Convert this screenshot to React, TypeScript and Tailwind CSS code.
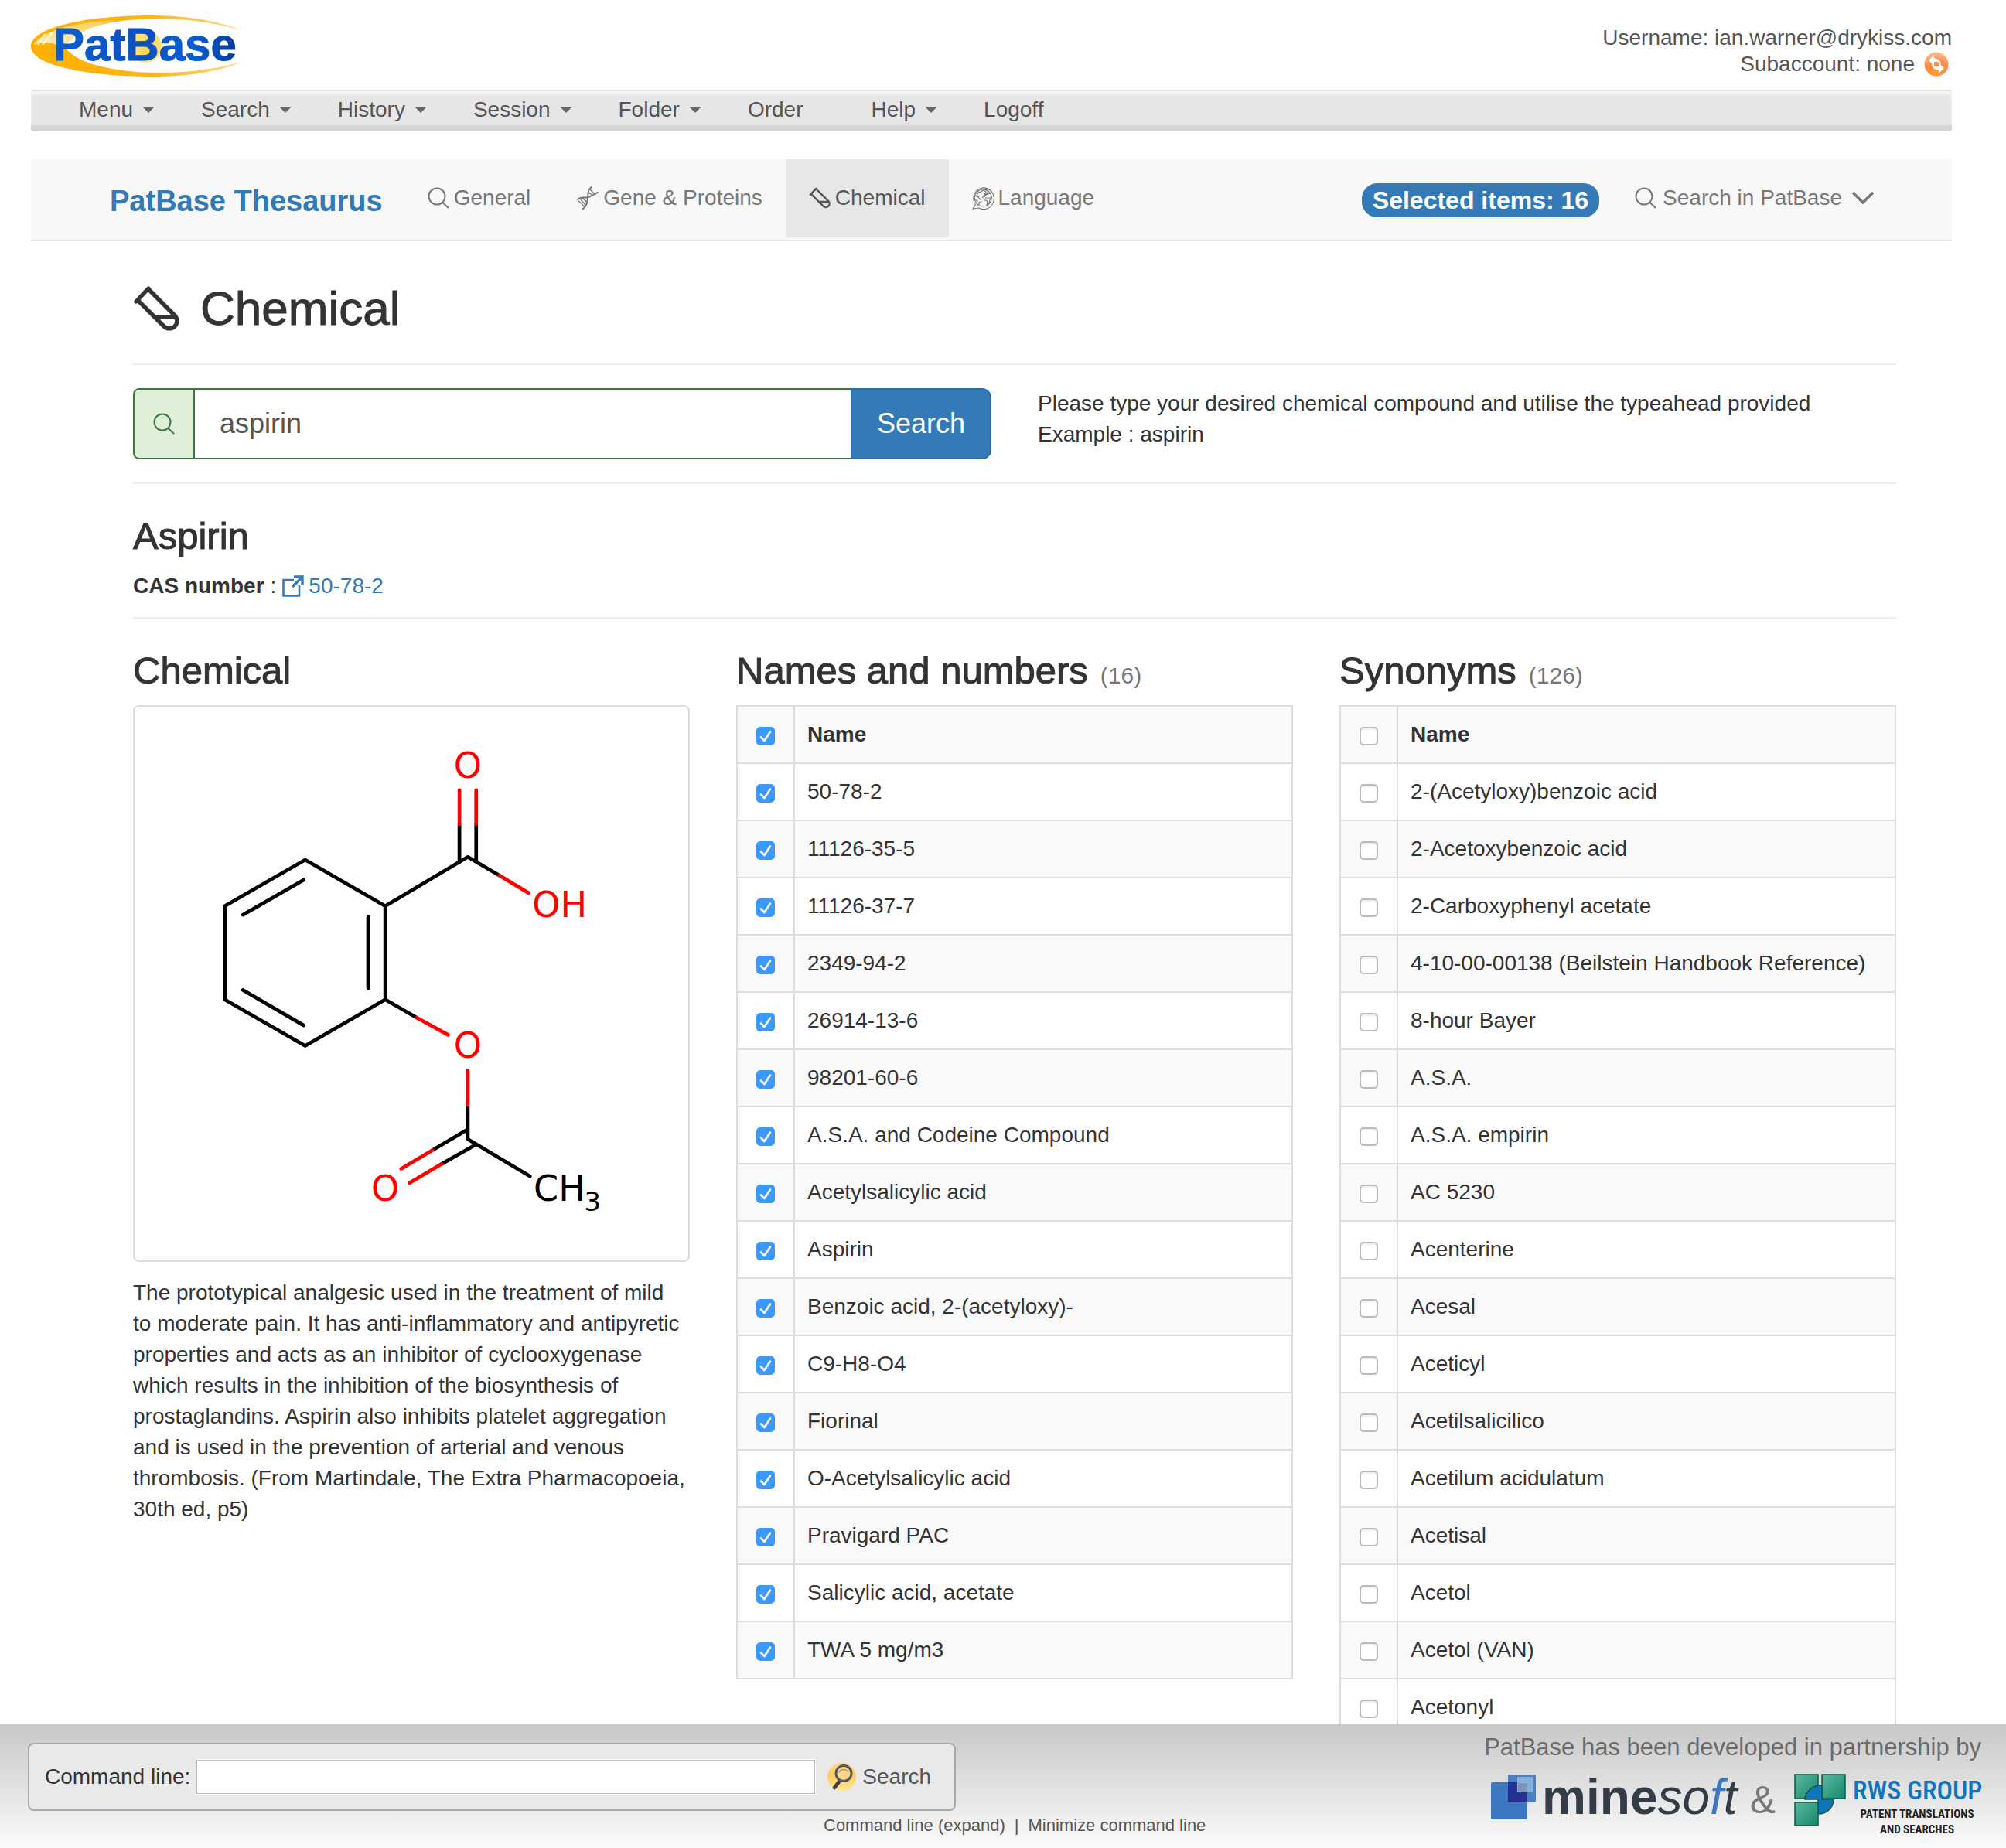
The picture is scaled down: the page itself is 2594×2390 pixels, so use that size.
import type { ReactNode } from "react";

const names = [
  "50-78-2",
  "11126-35-5",
  "11126-37-7",
  "2349-94-2",
  "26914-13-6",
  "98201-60-6",
  "A.S.A. and Codeine Compound",
  "Acetylsalicylic acid",
  "Aspirin",
  "Benzoic acid, 2-(acetyloxy)-",
  "C9-H8-O4",
  "Fiorinal",
  "O-Acetylsalicylic acid",
  "Pravigard PAC",
  "Salicylic acid, acetate",
  "TWA 5 mg/m3",
];

const synonyms = [
  "2-(Acetyloxy)benzoic acid",
  "2-Acetoxybenzoic acid",
  "2-Carboxyphenyl acetate",
  "4-10-00-00138 (Beilstein Handbook Reference)",
  "8-hour Bayer",
  "A.S.A.",
  "A.S.A. empirin",
  "AC 5230",
  "Acenterine",
  "Acesal",
  "Aceticyl",
  "Acetilsalicilico",
  "Acetilum acidulatum",
  "Acetisal",
  "Acetol",
  "Acetol (VAN)",
  "Acetonyl",
];

const menu = [
  { label: "Menu", caret: true },
  { label: "Search", caret: true },
  { label: "History", caret: true },
  { label: "Session", caret: true },
  { label: "Folder", caret: true },
  { label: "Order", caret: false },
  { label: "Help", caret: true },
  { label: "Logoff", caret: false },
];

function PatBaseLogo() {
  return (
    <svg className="h-[80px] w-[276px]" viewBox="0 0 276 80" role="img" aria-label="PatBase">
      <defs>
        <linearGradient id="swoosh" x1="0" y1="0" x2="1" y2="0">
          <stop offset="0" stopColor="#ffb000" />
          <stop offset="0.55" stopColor="#ffb414" />
          <stop offset="0.8" stopColor="#fcc94e" />
          <stop offset="1" stopColor="#fde3a0" />
        </linearGradient>
        <linearGradient id="gloss" x1="0" y1="0" x2="0" y2="1">
          <stop offset="0" stopColor="#ffcf5a" />
          <stop offset="1" stopColor="#fff0c4" />
        </linearGradient>
        <linearGradient id="lettering" x1="0" y1="0" x2="1" y2="0">
          <stop offset="0" stopColor="#0a5fd0" />
          <stop offset="0.5" stopColor="#0a50bd" />
          <stop offset="0.75" stopColor="#0b5fd2" />
          <stop offset="1" stopColor="#063c9a" />
        </linearGradient>
        <radialGradient id="sun" cx="0.6" cy="0.5" r="0.6">
          <stop offset="0" stopColor="#ffd23c" />
          <stop offset="1" stopColor="#ffe68a" />
        </radialGradient>
      </defs>
      <path
        d="M275 20C240 6 195 0 155 0C70 0 0 16 0 40C0 64 70 79 160 79C200 79 245 73 275 59C245 68 210 74 165 74C110 74 55 62 44 40C50 16 110 4 165 4C205 4 245 11 275 20Z"
        fill="url(#swoosh)"
      />
      <path d="M4 38C12 22 50 9 110 6C70 16 50 28 44 42C28 34 14 34 4 38Z" fill="url(#gloss)" />
      <path d="M9 38L18 24M15 38L28 22" stroke="#fff6dc" strokeWidth="2" />
      <circle cx="148" cy="40" r="21" fill="url(#sun)" />
      <text
        x="29"
        y="58"
        fontSize="60"
        fontWeight="700"
        fontFamily="'Liberation Sans', Arial, sans-serif"
        fill="url(#lettering)"
        stroke="url(#lettering)"
        strokeWidth="1"
      >
        PatBase
      </text>
    </svg>
  );
}

function SearchIcon({ className }: { className: string }) {
  return (
    <svg className={className} viewBox="0 0 28 28" fill="none" stroke="currentColor" strokeWidth="2" aria-hidden="true">
      <circle cx="12" cy="12" r="10.5" />
      <path d="M19 19.5L27 27" />
    </svg>
  );
}

function TubeIcon({ className }: { className: string }) {
  return (
    <svg
      className={className}
      viewBox="0 0 60 62"
      fill="none"
      stroke="currentColor"
      strokeWidth="5.400"
      strokeLinecap="round"
      aria-hidden="true"
    >
      <path d="M4 22L20 5" />
      <path d="M7 21L40 54A9.500 9.500 0 0 0 54 40L21 7" />
      <path d="M29 42H53" />
    </svg>
  );
}

function DnaIcon({ className }: { className: string }) {
  return (
    <svg className={className} viewBox="0 0 28 30" fill="none" stroke="currentColor" strokeLinecap="round" aria-hidden="true">
      <path d="M1 17C5 12 11 16 15 14C19 13 21 10 27 8" strokeWidth="2" />
      <path d="M19 1C13 5 15 10 14 15C13 20 14 24 8 29" strokeWidth="2" />
      <path d="M17 4L24 11M15.500 8L20 12M4 16L11 24M8 15.500L12.500 20.500M2.500 19L9.500 26" strokeWidth="1.200" />
    </svg>
  );
}

function GlobeIcon({ className }: { className: string }) {
  return (
    <svg className={className} viewBox="0 0 28 30" fill="none" stroke="currentColor" strokeWidth="1.100" aria-hidden="true">
      <path d="M4.500 24A13.200 13.800 0 1 1 9 28L1 29Z" />
      <circle cx="14.200" cy="14.800" r="11" />
      <path d="M7 6L10 8L14 5L18 7L16 10L20 10M15 4L21 6L19 9L15 12L13 15M23 9L18 11L15 15L17 18L20 19L19 24L22 22L23 17L25 15H17M4 12L8 14L11 17L12 20L9 21L9 25M4 17L7 19L6 22M8 8L6 12L10 13" />
    </svg>
  );
}

function ExternalIcon({ className }: { className: string }) {
  return (
    <svg className={className} viewBox="0 0 28 28" fill="none" stroke="currentColor" aria-hidden="true">
      <path d="M15 6H1.500V26.500H22V13" strokeWidth="2.600" />
      <path d="M13 15L25 3" strokeWidth="3.400" />
      <path d="M15 2H26V13" strokeWidth="3.400" />
    </svg>
  );
}

function SwapIcon() {
  return (
    <svg className="h-8 w-8" viewBox="0 0 32 32" aria-hidden="true">
      <defs>
        <radialGradient id="swap" cx="0.5" cy="0.85" r="0.8">
          <stop offset="0" stopColor="#ff9a2e" />
          <stop offset="0.6" stopColor="#fb8c4a" />
          <stop offset="1" stopColor="#fdb888" />
        </radialGradient>
      </defs>
      <circle cx="16" cy="16" r="15.500" fill="url(#swap)" />
      <path d="M6 11L13 4V8L19 10L23 16L17 13H13V18Z" fill="#fff" />
      <path d="M26 21L19 28V24L13 22L9 16L15 19H19V14Z" fill="#fff" />
    </svg>
  );
}

function LensIcon() {
  return (
    <svg className="h-[38px] w-[37px]" viewBox="0 0 37 38" aria-hidden="true">
      <defs>
        <linearGradient id="lens" x1="0" y1="0" x2="0" y2="1">
          <stop offset="0" stopColor="#fbd9a0" />
          <stop offset="0.4" stopColor="#ffcb5e" />
          <stop offset="1" stopColor="#ffe98f" />
        </linearGradient>
      </defs>
      <circle cx="18.500" cy="19" r="18.500" fill="url(#lens)" />
      <path d="M16 24L9 33" stroke="#3f3f3f" strokeWidth="4.500" strokeLinecap="round" />
      <circle cx="21" cy="14.500" r="10" fill="#fbd58c" stroke="#55575a" strokeWidth="3" />
      <path d="M15 13C17 9 24 8 27 13" fill="none" stroke="#c99b58" strokeWidth="1.800" />
    </svg>
  );
}

function Molecule() {
  return (
    <svg
      className="w-full"
      viewBox="27 27 1522 1522"
      fill="none"
      strokeWidth="10"
      strokeLinecap="round"
      strokeLinejoin="round"
      role="img"
      aria-label="Structure of aspirin"
    >
      <g stroke="#000">
        <path d="M496 448L716 575V832L496 959L275 832V575Z" />
        <path d="M492 503L325 599M669 605V801M325 806L492 903" />
        <path d="M716 575L943 440L1030 491" />
        <path d="M920 350V453M966 350V453" />
        <path d="M716 832L803 882" />
        <path d="M943 1126V1216L1114 1318" />
        <path d="M943 1189L846 1246M966 1230L871 1284" />
      </g>
      <g stroke="#f00">
        <path d="M920 256V350M966 256V350" />
        <path d="M1030 491L1110 539M803 882L889 929" />
        <path d="M943 1027V1122M846 1246L760 1297M871 1284L783 1336" />
      </g>
      <g fontFamily="'DejaVu Sans', sans-serif" fontSize="98" fill="#f00" stroke="none">
        <text x="943" y="222" textAnchor="middle">O</text>
        <text x="1120" y="605">OH</text>
        <text x="943" y="993" textAnchor="middle">O</text>
        <text x="716" y="1385" textAnchor="middle">O</text>
      </g>
      <g fontFamily="'DejaVu Sans', sans-serif" fill="#000" stroke="none">
        <text x="1124" y="1385" fontSize="98">CH</text>
        <text x="1263" y="1412" fontSize="72">3</text>
      </g>
    </svg>
  );
}

function MinesoftMark() {
  return (
    <svg className="h-[60px] w-[58px]" viewBox="0 0 58 60" aria-hidden="true">
      <rect x="0" y="11" width="47" height="48" rx="2" fill="#3c78c0" />
      <rect x="22" y="1" width="36" height="36" rx="2" fill="#4a80c6" />
      <rect x="22" y="11" width="25" height="26" fill="#262f92" />
      <rect x="34" y="4" width="20" height="20" fill="#86b0de" />
      <rect x="35" y="12" width="12" height="12" fill="#7f95b8" />
    </svg>
  );
}

function RwsMark() {
  return (
    <svg className="h-[68px] w-[68px]" viewBox="0 0 68 68" aria-hidden="true">
      <defs>
        <linearGradient id="tile" x1="0" y1="0" x2="1" y2="1">
          <stop offset="0" stopColor="#5fb9a0" />
          <stop offset="1" stopColor="#12876b" />
        </linearGradient>
      </defs>
      <g stroke="#0c5a48" strokeWidth="1.500">
        <rect x="1" y="1" width="30" height="31" fill="url(#tile)" />
        <rect x="36" y="1" width="30" height="31" fill="url(#tile)" />
        <path d="M31 15C20 18 14 26 14 33H31V52C42 52 51 44 51 33H36V15Z" fill="#0f75bc" />
        <rect x="1" y="37" width="30" height="30" fill="url(#tile)" />
      </g>
    </svg>
  );
}

function Heading({ children, count }: { children: ReactNode; count?: number }) {
  return (
    <h3 className="flex h-[54px] items-baseline gap-4 text-[49px] leading-[54px] [-webkit-text-stroke:1px_#333]">
      {children}
      {count !== undefined && (
        <small className="text-[30px] text-[#777] [-webkit-text-stroke:0]">({count})</small>
      )}
    </h3>
  );
}

function CheckCell({ label, checked }: { label: string; checked: boolean }) {
  return (
    <td className="w-[74px] border-2 border-[#ddd] p-0">
      <label className="relative mx-auto mt-1 block size-6">
        <input
          type="checkbox"
          aria-label={label}
          defaultChecked={checked}
          className="peer block size-6 appearance-none rounded-[5px] border-2 border-[#bbb] bg-white shadow-[inset_0_2px_2px_#eee] checked:border-[#3b99fc] checked:bg-[#3b99fc] checked:shadow-none"
        />
        <svg
          className="pointer-events-none absolute inset-0 hidden size-6 peer-checked:block"
          viewBox="0 0 24 24"
          fill="none"
          stroke="#fff"
          strokeWidth="2.600"
          strokeLinecap="round"
          strokeLinejoin="round"
          aria-hidden="true"
        >
          <path d="M6 13.500L10.500 18L18 6.500" />
        </svg>
      </label>
    </td>
  );
}

function NameTable({ rows, checked, caption }: { rows: string[]; checked: boolean; caption: string }) {
  return (
    <table className="w-full table-fixed border-collapse" aria-label={caption}>
      <thead>
        <tr className="h-[74px] bg-[#f9f9f9]">
          <CheckCell label={"Select all " + caption} checked={checked} />
          <th scope="col" className="border-2 border-[#ddd] px-4 text-left font-bold">
            Name
          </th>
        </tr>
      </thead>
      <tbody>
        {rows.map((row) => (
          <tr key={row} className="h-[74px] bg-white even:bg-[#f9f9f9]">
            <CheckCell label={row} checked={checked} />
            <td className="border-2 border-[#ddd] px-4 whitespace-nowrap">{row}</td>
          </tr>
        ))}
      </tbody>
    </table>
  );
}

function Tab({ icon, label, active }: { icon: ReactNode; label: string; active?: boolean }) {
  return (
    <a
      href="#"
      aria-current={active ? "page" : undefined}
      className={
        active
          ? "flex h-[100px] items-center gap-1.5 bg-[#e7e7e7] px-[30px] text-[#555]"
          : "flex h-[100px] items-center gap-1.5 px-[30px] text-[#777]"
      }
    >
      {icon}
      {label}
    </a>
  );
}

export default function App() {
  return (
    <div className="min-h-screen bg-white font-['Liberation_Sans',Arial,sans-serif] text-[28px] leading-[40px] text-[#333]">
      <div className="pr-[70px] pl-10">
        <header className="flex h-[116px] justify-between pt-5">
          <a href="#" className="block h-20">
            <PatBaseLogo />
          </a>
          <div className="pt-3 text-right leading-[34px] text-[#555]">
            <div>Username: ian.warner@drykiss.com</div>
            <div className="flex items-center justify-end gap-3 pr-1">
              Subaccount: none
              <button type="button" aria-label="Switch subaccount">
                <SwapIcon />
              </button>
            </div>
          </div>
        </header>

        <nav
          aria-label="Main"
          className="flex h-[54px] items-center gap-[60px] rounded border-t-2 border-b-8 border-t-[#e2e2e2] border-b-[#d4d5d7] bg-[#e6e6e6] pt-1 pl-[62px] text-[#555] shadow-[inset_0_4px_3px_#f6f6f6]"
        >
          {menu.map((item) => (
            <a key={item.label} href="#" className="flex items-center gap-3">
              {item.label}
              {item.label !== "Logoff" && (
                <span
                  className={
                    item.caret
                      ? "border-x-8 border-t-8 border-x-transparent border-t-[#666]"
                      : "border-x-8 border-t-8 border-transparent"
                  }
                />
              )}
            </a>
          ))}
        </nav>

        <nav
          aria-label="Thesaurus"
          className="mt-9 flex h-[106px] items-start border-b-2 border-[#e7e7e7] bg-[#f8f8f8] pr-[100px] pl-[102px]"
        >
          <a href="#" className="mr-7 pt-1 text-[38px] leading-[100px] font-bold text-[#337ab7]">
            PatBase Thesaurus
          </a>
          <Tab icon={<SearchIcon className="size-7" />} label="General" />
          <Tab icon={<DnaIcon className="h-[30px] w-7" />} label="Gene & Proteins" />
          <Tab icon={<TubeIcon className="h-[30px] w-7" />} label="Chemical" active />
          <Tab icon={<GlobeIcon className="h-[30px] w-7" />} label="Language" />
          <div className="ml-auto flex h-[106px] items-center">
            <span className="rounded-[20px] bg-[#337ab7] px-[14px] text-[32px] leading-[44px] font-bold text-white">
              Selected items: 16
            </span>
          </div>
          <button type="button" className="ml-[46px] flex h-[100px] items-center gap-2 text-[#777]">
            <SearchIcon className="size-7" />
            Search in PatBase
            <svg className="ml-1 h-5 w-[30px]" viewBox="0 0 30 20" fill="none" stroke="currentColor" strokeWidth="3.500" aria-hidden="true">
              <path d="M2 3L15 16L28 3" />
            </svg>
          </button>
        </nav>

        <main className="pr-[72px] pl-[132px]">
          <h1 className="flex h-[160px] items-center gap-[27px] border-b-2 border-[#eee] pt-4 text-[62px] leading-[66px] [-webkit-text-stroke:1px_#333]">
            <TubeIcon className="h-[62px] w-[60px]" />
            Chemical
          </h1>

          <form className="grid grid-cols-2 gap-[60px] border-b-2 border-[#eee] py-[30px]">
            <div className="flex h-[92px]">
              <label
                htmlFor="compound"
                aria-label="Chemical compound"
                className="flex w-[78px] items-center justify-center rounded-l-lg border-2 border-r-0 border-[#3c763d] bg-[#dff0d8] text-[#3c763d]"
              >
                <SearchIcon className="size-7" />
              </label>
              <input
                id="compound"
                type="text"
                defaultValue="aspirin"
                className="min-w-0 flex-1 border-2 border-r-0 border-[#3c763d] bg-white px-8 text-[36px] text-[#555] shadow-[inset_0_2px_2px_rgba(0,0,0,0.075)] outline-none"
              />
              <button
                type="button"
                className="rounded-r-xl border-2 border-[#2e6da4] bg-[#337ab7] px-8 text-[36px] text-white"
              >
                Search
              </button>
            </div>
            <p>
              Please type your desired chemical compound and utilise the typeahead provided
              <br />
              Example : aspirin
            </p>
          </form>

          <section className="h-[174px] border-b-2 border-[#eee] pt-10">
            <Heading>Aspirin</Heading>
            <p className="mt-[18px] flex items-center">
              <b>CAS number</b>
              <span className="ml-2">:</span>
              <a href="#" className="ml-2 flex items-center gap-1.5 text-[#337ab7]">
                <ExternalIcon className="size-7" />
                50-78-2
              </a>
            </p>
          </section>

          <div className="grid grid-cols-3 gap-[60px] pt-10">
            <section>
              <Heading>Chemical</Heading>
              <div className="mt-[18px] overflow-hidden rounded-lg border-2 border-[#ddd]">
                <Molecule />
              </div>
              <p className="mt-5">
                The prototypical analgesic used in the treatment of mild to&nbsp;moderate pain. It has anti-inflammatory
                and antipyretic properties and acts as an inhibitor of cyclooxygenase which results in the inhibition of
                the biosynthesis of prostaglandins. Aspirin also inhibits platelet aggregation and is used in the
                prevention of arterial and venous thrombosis. (From Martindale, The Extra Pharmacopoeia, 30th ed, p5)
              </p>
            </section>
            <section>
              <Heading count={16}>Names and numbers</Heading>
              <div className="mt-[18px]">
                <NameTable rows={names} checked caption="Names and numbers" />
              </div>
            </section>
            <section>
              <Heading count={126}>Synonyms</Heading>
              <div className="mt-[18px]">
                <NameTable rows={synonyms} checked={false} caption="Synonyms" />
              </div>
            </section>
          </div>
        </main>
      </div>

      <footer className="fixed inset-x-0 bottom-0 flex h-[160px] justify-between bg-linear-to-b from-[#c8c8c8] to-[#fbfbfb] pr-8 pl-9">
        <div className="flex items-end">
          <form className="mb-12 flex h-[88px] w-[1200px] items-center rounded-lg border-2 border-[#a8a8a8] bg-[#e9e9e9] pl-5">
            <label htmlFor="command">Command line:</label>
            <input
              id="command"
              type="text"
              className="ml-2 h-[44px] w-[800px] border border-[#bbb] bg-white outline-1 outline-white"
            />
            <button type="button" className="ml-4 flex items-center gap-2 text-[#555]">
              <LensIcon />
              Search
            </button>
          </form>
          <div className="mb-[14px] -ml-[171px] flex gap-3 text-[22px] leading-[30px] text-[#555]">
            <a href="#">Command line (expand)</a>
            <span>|</span>
            <a href="#">Minimize command line</a>
          </div>
        </div>
        <div className="pt-2">
          <div className="text-[31px] leading-[44px] text-[#6b6b6b]">PatBase has been developed in partnership by</div>
          <div className="mt-3 flex items-start justify-end">
            <MinesoftMark />
            <div className="ml-2 text-[64px] leading-[60px] text-[#333c47]">
              <b>mine</b>
              <i>
                so<span className="text-[#3c78c0]">f</span>t
              </i>
            </div>
            <div className="ml-4 text-[50px] leading-[68px] text-[#777]">&amp;</div>
            <div className="ml-6">
              <RwsMark />
            </div>
            <div className="ml-2 w-[166px] text-center font-['Roboto_Condensed','Liberation_Sans',sans-serif] text-[15px] leading-[20px] font-bold whitespace-nowrap text-[#222]">
              <div className="text-[34px] leading-[42px] font-medium text-[#0f75bc]">RWS GROUP</div>
              <div>PATENT TRANSLATIONS</div>
              <div>AND SEARCHES</div>
            </div>
          </div>
        </div>
      </footer>
    </div>
  );
}
